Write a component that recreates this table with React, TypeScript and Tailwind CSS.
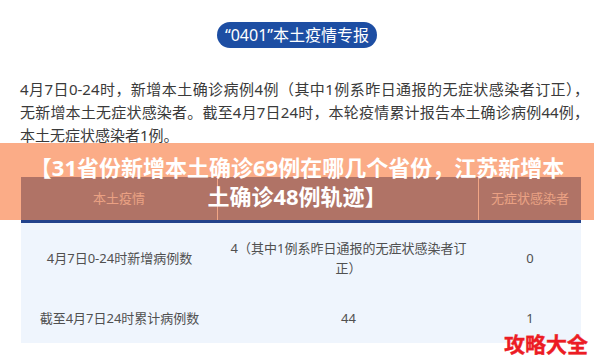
import React from "react";

const font = { fontFamily: '"Noto Sans", "Noto Sans CJK SC", sans-serif' };

export default function App() {
  return (
    <div
      className="relative w-[594px] h-[363px] bg-white overflow-hidden"
      style={font}
    >
      {/* badge */}
      <div className="flex justify-center pt-[22px]">
        <div className="inline-flex h-[26px] items-center rounded-full bg-[#1d4ea3] px-[8px] text-[16px] leading-none text-white">
          “0401”本土疫情专报
        </div>
      </div>

      {/* paragraph */}
      <div className="mt-[30px] pl-[20px] pr-[5px] text-[15px] leading-[23px] text-[#3a3a3a]">
        <div className="whitespace-nowrap text-justify [text-align-last:justify]">
          4月7日0-24时，新增本土确诊病例4例（其中1例系昨日通报的无症状感染者订正），
        </div>
        <div className="whitespace-nowrap text-justify [text-align-last:justify]">
          无新增本土无症状感染者。截至4月7日24时，本轮疫情累计报告本土确诊病例44例，
        </div>
        <div className="whitespace-nowrap">本土无症状感染者1例。</div>
      </div>

      {/* table */}
      <div className="ml-[21px] mt-[30px] w-[560px]">
        <div className="flex h-[43px] bg-[#4472ac] text-[13px] text-[#d6e2f4]">
          <div className="flex w-[197px] items-center justify-center border-r border-[#e6eef9]">
            本土疫情
          </div>
          <div className="flex w-[261px] items-center justify-center border-r border-[#e6eef9]"></div>
          <div className="flex flex-1 items-center justify-center">无症状感染者</div>
        </div>
        <div className="h-[3px] bg-[#22428c]"></div>
        <div className="bg-[#eff5fd] text-[13px] leading-[20px] text-[#505050]">
          <div className="flex py-[15px]">
            <div className="flex w-[197px] items-center justify-center">4月7日0-24时新增病例数</div>
            <div className="flex w-[261px] items-center justify-center text-center">
              <div>
                4（其中1例系昨日通报的无症状感染者订
                <br />
                正）
              </div>
            </div>
            <div className="flex flex-1 items-center justify-center">0</div>
          </div>
          <div className="flex py-[15px]">
            <div className="flex w-[197px] items-center justify-center">截至4月7日24时累计病例数</div>
            <div className="flex w-[261px] items-center justify-center">44</div>
            <div className="flex flex-1 items-center justify-center">1</div>
          </div>
        </div>
      </div>

      {/* orange overlay with title */}
      <div className="absolute left-0 right-0 top-[143px] flex h-[77px] flex-col items-center justify-center bg-[rgba(248,117,55,0.6)] text-center text-[22px] font-bold leading-[29px] text-white">
        <div className="whitespace-nowrap">【31省份新增本土确诊69例在哪几个省份，江苏新增本</div>
        <div className="whitespace-nowrap">土确诊48例轨迹】</div>
      </div>

      {/* watermark */}
      <div className="absolute right-[6px] top-[334px] text-[21px] font-bold leading-[21px] text-[#ec1c24] [-webkit-text-stroke:0.4px_#ec1c24]">
        攻略大全
      </div>
    </div>
  );
}
